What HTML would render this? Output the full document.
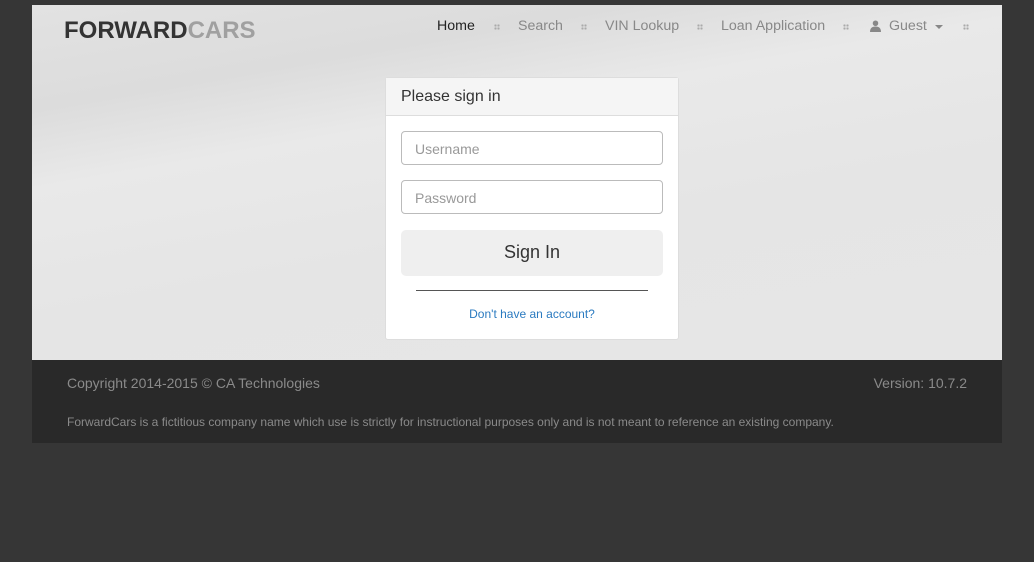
<!DOCTYPE html>
<html><head><style>
body{margin:0;width:1034px;height:562px;background:#363636;font-family:"Liberation Sans",sans-serif;position:relative;overflow:hidden}
.main{position:absolute;left:32px;top:5px;width:970px;height:355px;background:linear-gradient(170deg,#e2e2e2 0%,#dcdcdc 20%,#e9e9e9 35%,#e5e5e5 60%,#e6e6e6 100%)}
.logo{position:absolute;left:32px;top:12px;font-size:24px;font-weight:bold;color:#333}
.logo span{color:#a0a0a0}
.nav{position:absolute;top:13px;font-size:14.2px;color:#888}
.dot{position:absolute;top:19px;width:6px;height:6px;background:radial-gradient(circle,#aaa 1px,transparent 1.3px) 0 0/3px 3px}
.panel{position:absolute;left:353px;top:72px;width:292px;height:261px;background:#fff;border:1px solid #ddd;border-radius:3px}
.ph{height:38px;background:#f5f5f5;border-bottom:1px solid #ddd;font-size:16px;color:#333;padding:10px 15px 0;box-sizing:border-box}
.in{position:absolute;left:15px;width:262px;height:34px;border:1px solid #bbb;border-radius:4px;font-size:14px;color:#999;padding:9px 13px;box-sizing:border-box}
.btn{position:absolute;left:15px;top:152px;width:262px;height:46px;background:#efefef;border-radius:5px;text-align:center;line-height:44px;font-size:18px;color:#333}
.foot{position:absolute;left:32px;top:360px;width:970px;height:83px;background:#292929;color:#8a8a8a}
</style></head><body>
<div class="main">
<div class="logo">FORWARD<span>CARS</span></div>
<div class="nav" style="left:405px;color:#222">Home</div>
<div class="dot" style="left:462px"></div>
<div class="nav" style="left:486px">Search</div>
<div class="dot" style="left:549px"></div>
<div class="nav" style="left:573px">VIN Lookup</div>
<div class="dot" style="left:665px"></div>
<div class="nav" style="left:689px">Loan Application</div>
<div class="dot" style="left:811px"></div>
<svg style="position:absolute;left:838px;top:15px" width="11" height="12" viewBox="0 0 12 13"><circle cx="6" cy="3.5" r="3" fill="#888"/><path d="M0 13 Q0 7 6 7 Q12 7 12 13Z" fill="#888"/></svg>
<div class="nav" style="left:857px">Guest</div>
<svg style="position:absolute;left:903px;top:20px" width="8" height="5"><path d="M0 0H8L4 4Z" fill="#888"/></svg>
<div class="dot" style="left:931px"></div>
<div class="panel">
<div class="ph">Please sign in</div>
<div class="in" style="top:53px">Username</div>
<div class="in" style="top:102px">Password</div>
<div class="btn">Sign In</div>
<div style="position:absolute;left:30px;top:212px;width:232px;border-top:1px solid #555"></div>
<div style="position:absolute;left:0;width:292px;top:229px;text-align:center;font-size:12px;color:#2a7ac0">Don't have an account?</div>
</div>
</div>
<div class="foot">
<div style="position:absolute;left:35px;top:15px;font-size:14px">Copyright 2014-2015 © CA Technologies</div>
<div style="position:absolute;right:35px;top:15px;font-size:14px">Version: 10.7.2</div>
<div style="position:absolute;left:35px;top:55px;font-size:12px">ForwardCars is a fictitious company name which use is strictly for instructional purposes only and is not meant to reference an existing company.</div>
</div>
</body></html>
